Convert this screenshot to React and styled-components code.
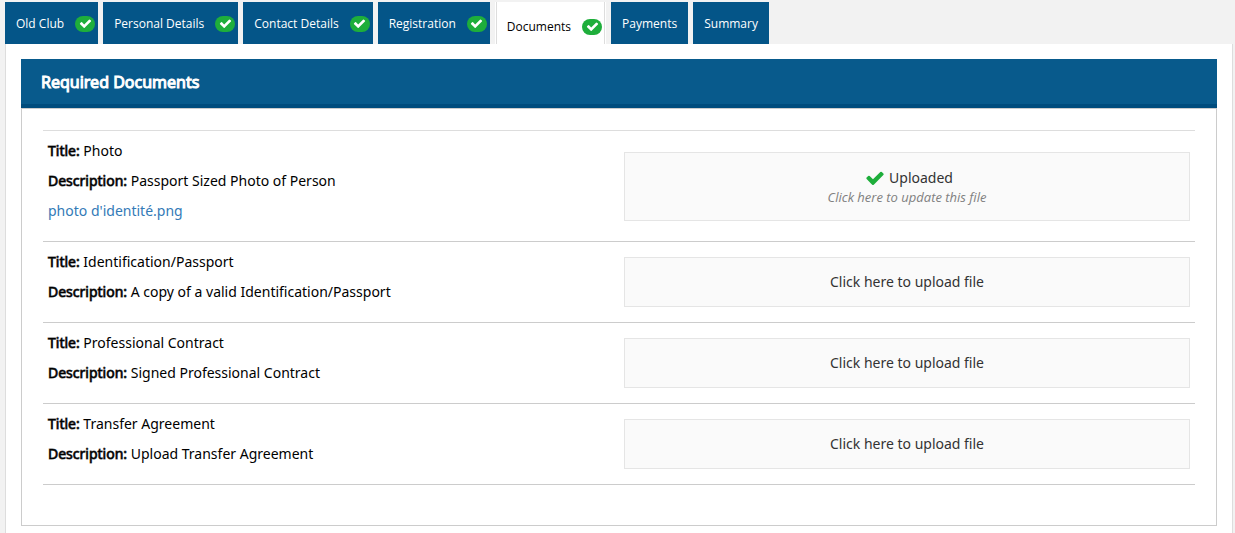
import styled, { createGlobalStyle } from 'styled-components'

const theme = {
    blue: '#045588',
    blueHeader: '#085a8c',
    blueDark: '#004c7d',
    green: '#1eae3b',
    link: '#337ab7',
    page: '#f2f2f2',
    line: '#ccc',
    lineLight: '#ddd',
}

const tabs = [
    { label: 'Old Club', done: true },
    { label: 'Personal Details', done: true },
    { label: 'Contact Details', done: true },
    { label: 'Registration', done: true },
    { label: 'Documents', done: true, active: true },
    { label: 'Payments' },
    { label: 'Summary' },
]

const documents = [
    { title: 'Photo', description: 'Passport Sized Photo of Person', file: "photo d'identité.png" },
    { title: 'Identification/Passport', description: 'A copy of a valid Identification/Passport' },
    { title: 'Professional Contract', description: 'Signed Professional Contract' },
    { title: 'Transfer Agreement', description: 'Upload Transfer Agreement' },
]

function Check({ size }) {
    return (
        <svg width={size} height={size} viewBox="0 0 1792 1792" fill="currentColor" aria-hidden="true">
            <path d="M1671 566q0 40-28 68l-724 724-136 136q-28 28-68 28t-68-28l-136-136-362-362q-28-28-28-68t28-68l136-136q28-28 68-28t68 28l294 295 656-657q28-28 68-28t68 28l136 136q28 28 28 68z" />
        </svg>
    )
}

function DocumentRow({ title, description, file }) {
    return (
        <Row>
            <Details>
                <p><Strong>Title:</Strong> {title}</p>
                <p><Strong>Description:</Strong> {description}</p>
                {file && <p><a href="#file">{file}</a></p>}
            </Details>
            <UploadButton type="button">
                {file ? (
                    <>
                        <Uploaded><Check size={20} />Uploaded</Uploaded>
                        <Hint>Click here to update this file</Hint>
                    </>
                ) : 'Click here to upload file'}
            </UploadButton>
        </Row>
    )
}

export default function App() {
    return (
        <Page>
            <GlobalStyle />
            <Tabs>
                {tabs.map(({ label, done, active }) => (
                    <Tab
                        key={label}
                        href="#step"
                        $done={done}
                        $active={active}
                        aria-current={active ? 'step' : undefined}
                    >
                        {label}
                        {done && <Badge><Check size={13} /></Badge>}
                    </Tab>
                ))}
            </Tabs>
            <Content>
                <PanelHeader>Required Documents</PanelHeader>
                <PanelBody>
                    {documents.map((doc) => <DocumentRow key={doc.title} {...doc} />)}
                </PanelBody>
            </Content>
        </Page>
    )
}

const GlobalStyle = createGlobalStyle`
    * {
        box-sizing: border-box;
    }
    body {
        margin: 0;
        background: ${theme.page};
        font-family: "Noto Sans", "Open Sans", sans-serif;
        font-size: 14px;
        line-height: 20px;
        color: #000;
    }
    a {
        color: ${theme.link};
        text-decoration: none;
    }
`

const Page = styled.div`
    display: flex;
    flex-direction: column;
    min-height: 100vh;
    padding: 2px 2px 0 5px;
`

const Tabs = styled.nav`
    display: flex;
    gap: 5px;
`

const Tab = styled.a`
    display: flex;
    align-items: center;
    gap: 11px;
    height: 42px;
    padding: 1px ${({ $done }) => ($done ? '3px' : '11px')} 0 11px;
    font-family: "Open Sans", "Noto Sans", sans-serif;
    font-size: 12px;
    white-space: nowrap;
    color: #fff;
    background: ${theme.blue};
    ${({ $active }) => $active && `
        padding: 7px 3px 0 11px;
        color: #000;
        background: #fff;
        border: solid #fff;
        border-width: 0 1px;
        box-shadow: inset 1px 0 ${theme.lineLight}, inset -1px 0 ${theme.lineLight};
    `}
`

const Badge = styled.span`
    display: flex;
    align-items: center;
    justify-content: center;
    width: 20px;
    height: 16px;
    border-radius: 8px;
    color: #fff;
    background: ${theme.green};
`

const Content = styled.main`
    flex: 1;
    padding: 15px 15px 0;
    background: #fff;
    border: solid ${theme.lineLight};
    border-width: 0 1px;
`

const PanelHeader = styled.h1`
    margin: 0;
    padding: 13px 20px 12px;
    font-size: 16px;
    font-weight: 400;
    line-height: 20px;
    -webkit-text-stroke: 1px currentColor;
    color: #fff;
    background: ${theme.blueHeader};
    border-bottom: 4px solid ${theme.blueDark};
`

const PanelBody = styled.section`
    padding: 21px 21px 40px;
    border: 1px solid ${theme.line};
`

const Row = styled.div`
    display: grid;
    grid-template-columns: 1fr 1fr;
    align-items: center;
    border-bottom: 1px solid ${theme.line};
    &:first-child {
        border-top: 1px solid ${theme.lineLight};
    }
`

const Details = styled.div`
    padding: 10px 5px;
    p {
        margin: 0 0 10px;
    }
`

const Strong = styled.strong`
    font-weight: 400;
    -webkit-text-stroke: 1px rgba(0, 0, 0, 0.7);
`

const UploadButton = styled.button`
    margin: 0 5px;
    padding: 14px;
    font: inherit;
    color: #333;
    background: #fafafa;
    border: 1px solid #e5e5e5;
    cursor: pointer;
`

const Uploaded = styled.span`
    display: flex;
    align-items: center;
    justify-content: center;
    gap: 4px;
    height: 22px;
    padding-left: 4px;
    svg {
        color: ${theme.green};
    }
`

const Hint = styled.em`
    display: block;
    font-family: "Open Sans", "Noto Sans", sans-serif;
    font-size: 13px;
    line-height: 17px;
    color: #808080;
`
